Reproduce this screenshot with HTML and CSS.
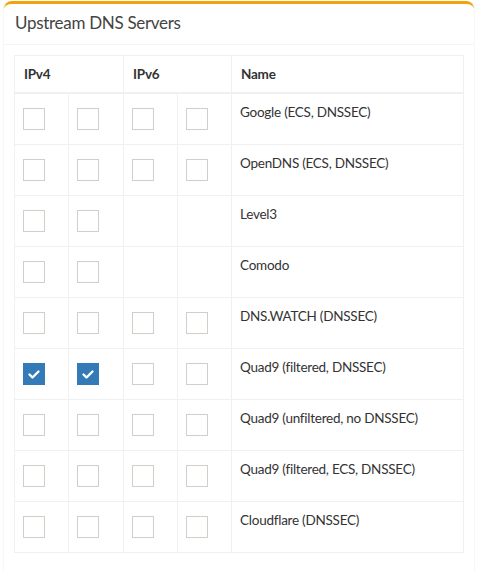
FILE: index.html
```html
<!DOCTYPE html>
<html>
<head>
<meta charset="utf-8">
<link rel="stylesheet" href="styles.css">
</head>
<body>
<div class="box">
  <div class="box-header">
    <h3 class="box-title">Upstream DNS Servers</h3>
  </div>
  <div class="box-body">
    <table class="dns-table">
      <colgroup>
        <col class="c-cb"><col class="c-cb2"><col class="c-cb"><col class="c-cb"><col>
      </colgroup>
      <thead>
        <tr><th colspan="2">IPv4</th><th colspan="2">IPv6</th><th>Name</th></tr>
      </thead>
      <tbody>
        <tr><td><span class="cb"></span></td><td><span class="cb"></span></td><td><span class="cb"></span></td><td><span class="cb"></span></td><td>Google (ECS, DNSSEC)</td></tr>
        <tr><td><span class="cb"></span></td><td><span class="cb"></span></td><td><span class="cb"></span></td><td><span class="cb"></span></td><td>OpenDNS (ECS, DNSSEC)</td></tr>
        <tr><td><span class="cb"></span></td><td><span class="cb"></span></td><td></td><td></td><td>Level3</td></tr>
        <tr><td><span class="cb"></span></td><td><span class="cb"></span></td><td></td><td></td><td>Comodo</td></tr>
        <tr><td><span class="cb"></span></td><td><span class="cb"></span></td><td><span class="cb"></span></td><td><span class="cb"></span></td><td>DNS.WATCH (DNSSEC)</td></tr>
        <tr><td><span class="cb checked"><svg viewBox="0 0 22 22" width="22" height="22"><polyline points="6.5,11.5 9.5,14.5 15.5,8.5" fill="none" stroke="#fff" stroke-width="2.4" stroke-linecap="round" stroke-linejoin="round"/></svg></span></td><td><span class="cb checked"><svg viewBox="0 0 22 22" width="22" height="22"><polyline points="6.5,11.5 9.5,14.5 15.5,8.5" fill="none" stroke="#fff" stroke-width="2.4" stroke-linecap="round" stroke-linejoin="round"/></svg></span></td><td><span class="cb"></span></td><td><span class="cb"></span></td><td>Quad9 (filtered, DNSSEC)</td></tr>
        <tr><td><span class="cb"></span></td><td><span class="cb"></span></td><td><span class="cb"></span></td><td><span class="cb"></span></td><td>Quad9 (unfiltered, no DNSSEC)</td></tr>
        <tr><td><span class="cb"></span></td><td><span class="cb"></span></td><td><span class="cb"></span></td><td><span class="cb"></span></td><td>Quad9 (filtered, ECS, DNSSEC)</td></tr>
        <tr><td><span class="cb"></span></td><td><span class="cb"></span></td><td><span class="cb"></span></td><td><span class="cb"></span></td><td>Cloudflare (DNSSEC)</td></tr>
      </tbody>
    </table>
  </div>
</div>
</body>
</html>
```
FILE: styles.css
```css
html, body {
  margin: 0;
  padding: 0;
  background: #fff;
}
body {
  font-family: Lato, "Liberation Sans", sans-serif;
  font-size: 13.5px;
  letter-spacing: -0.25px;
  color: #333;
}
.box {
  margin: 1px 4px 0 4px;
  background: #fff;
  border-top: 3px solid #f0a30a;
  border-radius: 8px 8px 0 0;
  box-shadow: 1px 0 0 #f7f7f7, -1px 0 0 #f7f7f7;
}
.box-header {
  padding: 7px 10px 10px 11px;
  border-bottom: 1px solid #f4f4f4;
}
.box-title {
  margin: 0;
  font-size: 17px;
  font-weight: normal;
  line-height: 23px;
  letter-spacing: -0.3px;
  color: #444;
}
.box-body {
  padding: 10px;
  height: 507px;
}
.dns-table {
  width: 450px;
  border-collapse: collapse;
  table-layout: fixed;
  border: 1px solid #f0f0f0;
}
.c-cb { width: 54px; }
.c-cb2 { width: 55px; }
.dns-table th {
  text-align: left;
  font-weight: bold;
  padding: 8px 8px 8px 9px;
  height: 20px;
  line-height: 20px;
  border: 1px solid #f0f0f0;
  border-bottom: 2px solid #f0f0f0;
  color: #333;
}
.dns-table td {
  padding: 8px;
  height: 34px;
  line-height: 20px;
  vertical-align: top;
  border: 1px solid #f0f0f0;
}
.cb {
  display: block;
  box-sizing: border-box;
  width: 22px;
  height: 22px;
  margin-top: 6px;
  border: 1px solid #d3cfc8;
  background: #fff;
}
.cb.checked {
  background: #337ab7;
  border-color: #337ab7;
}
.cb svg {
  display: block;
  margin: -1px;
}
```
